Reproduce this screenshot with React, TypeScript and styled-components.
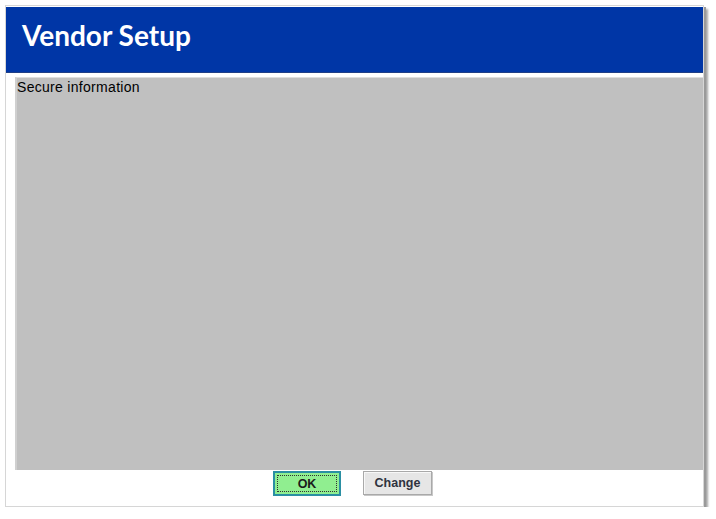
import React from "react";
import styled, { createGlobalStyle } from "styled-components";

const GlobalStyle = createGlobalStyle`
  html, body {
    margin: 0;
    padding: 0;
    background: #ffffff;
  }
  body {
    font-family: "Liberation Sans", Arial, sans-serif;
  }
`;

const Window = styled.div`
  box-sizing: border-box;
  margin: 5px 0 0 5px;
  width: 699px;
  height: 502px;
  background: #ffffff;
  border: 1px solid #d6d6d6;
  box-shadow: 2px 2px 0 #9a9a9a, 4px 4px 2px rgba(0, 0, 0, 0.35);
  display: flex;
  flex-direction: column;
`;

const Header = styled.div`
  margin-top: 1px;
  height: 66px;
  background: #0036a6;
  display: flex;
  align-items: center;
  padding-left: 16px;
  padding-bottom: 10px;
  box-sizing: border-box;
  border-bottom: 1px solid #1f3f86;
`;

const Title = styled.h1`
  margin: 0;
  color: #ffffff;
  font-family: Lato, "Open Sans", sans-serif;
  font-weight: 700;
  font-size: 28px;
  letter-spacing: 0;
`;

const Panel = styled.div`
  box-sizing: border-box;
  margin: 4px 0 0 9px;
  height: 393px;
  background: #c0c0c0;
  border-left: 2px solid #d0d0d0;
  border-top: 1px solid #dedede;
  padding: 1px 0 0 0;
`;

const PanelLabel = styled.div`
  font-family: "Liberation Sans", Arial, sans-serif;
  font-size: 14px;
  line-height: 16px;
  letter-spacing: 0.3px;
  color: #000000;
`;

const ButtonRow = styled.div`
  display: flex;
  justify-content: center;
  gap: 22px;
  margin-top: 1px;
  padding-right: 4px;
`;

const Button = styled.button<{ $primary?: boolean }>`
  box-sizing: border-box;
  height: ${(p) => (p.$primary ? "25px" : "24px")};
  width: ${(p) => (p.$primary ? "68px" : "69px")};
  padding: 0;
  font-family: "Liberation Sans", Arial, sans-serif;
  font-weight: 700;
  font-size: 12.5px;
  color: ${(p) => (p.$primary ? "#1a1a1a" : "#2f3340")};
  background: ${(p) => (p.$primary ? "#90ee90" : "#e6e6e6")};
  border: ${(p) => (p.$primary ? "2px solid #2a8fa3" : "1px solid #a9a9a9")};
  box-shadow: ${(p) =>
    p.$primary ? "none" : "inset 1px 1px 0 #f8f8f8, 1px 1px 0 #c8c8c8"};
  display: flex;
  align-items: center;
  justify-content: center;
  cursor: pointer;
`;

const FocusRing = styled.span`
  box-sizing: border-box;
  display: flex;
  align-items: center;
  justify-content: center;
  width: calc(100% - 4px);
  height: calc(100% - 4px);
  border: 1px dotted #303030;
`;

export default function App() {
  return (
    <>
      <GlobalStyle />
      <Window>
        <Header>
          <Title>Vendor Setup</Title>
        </Header>
        <Panel>
          <PanelLabel>Secure information</PanelLabel>
        </Panel>
        <ButtonRow>
          <Button $primary>
            <FocusRing>OK</FocusRing>
          </Button>
          <Button>Change</Button>
        </ButtonRow>
      </Window>
    </>
  );
}
